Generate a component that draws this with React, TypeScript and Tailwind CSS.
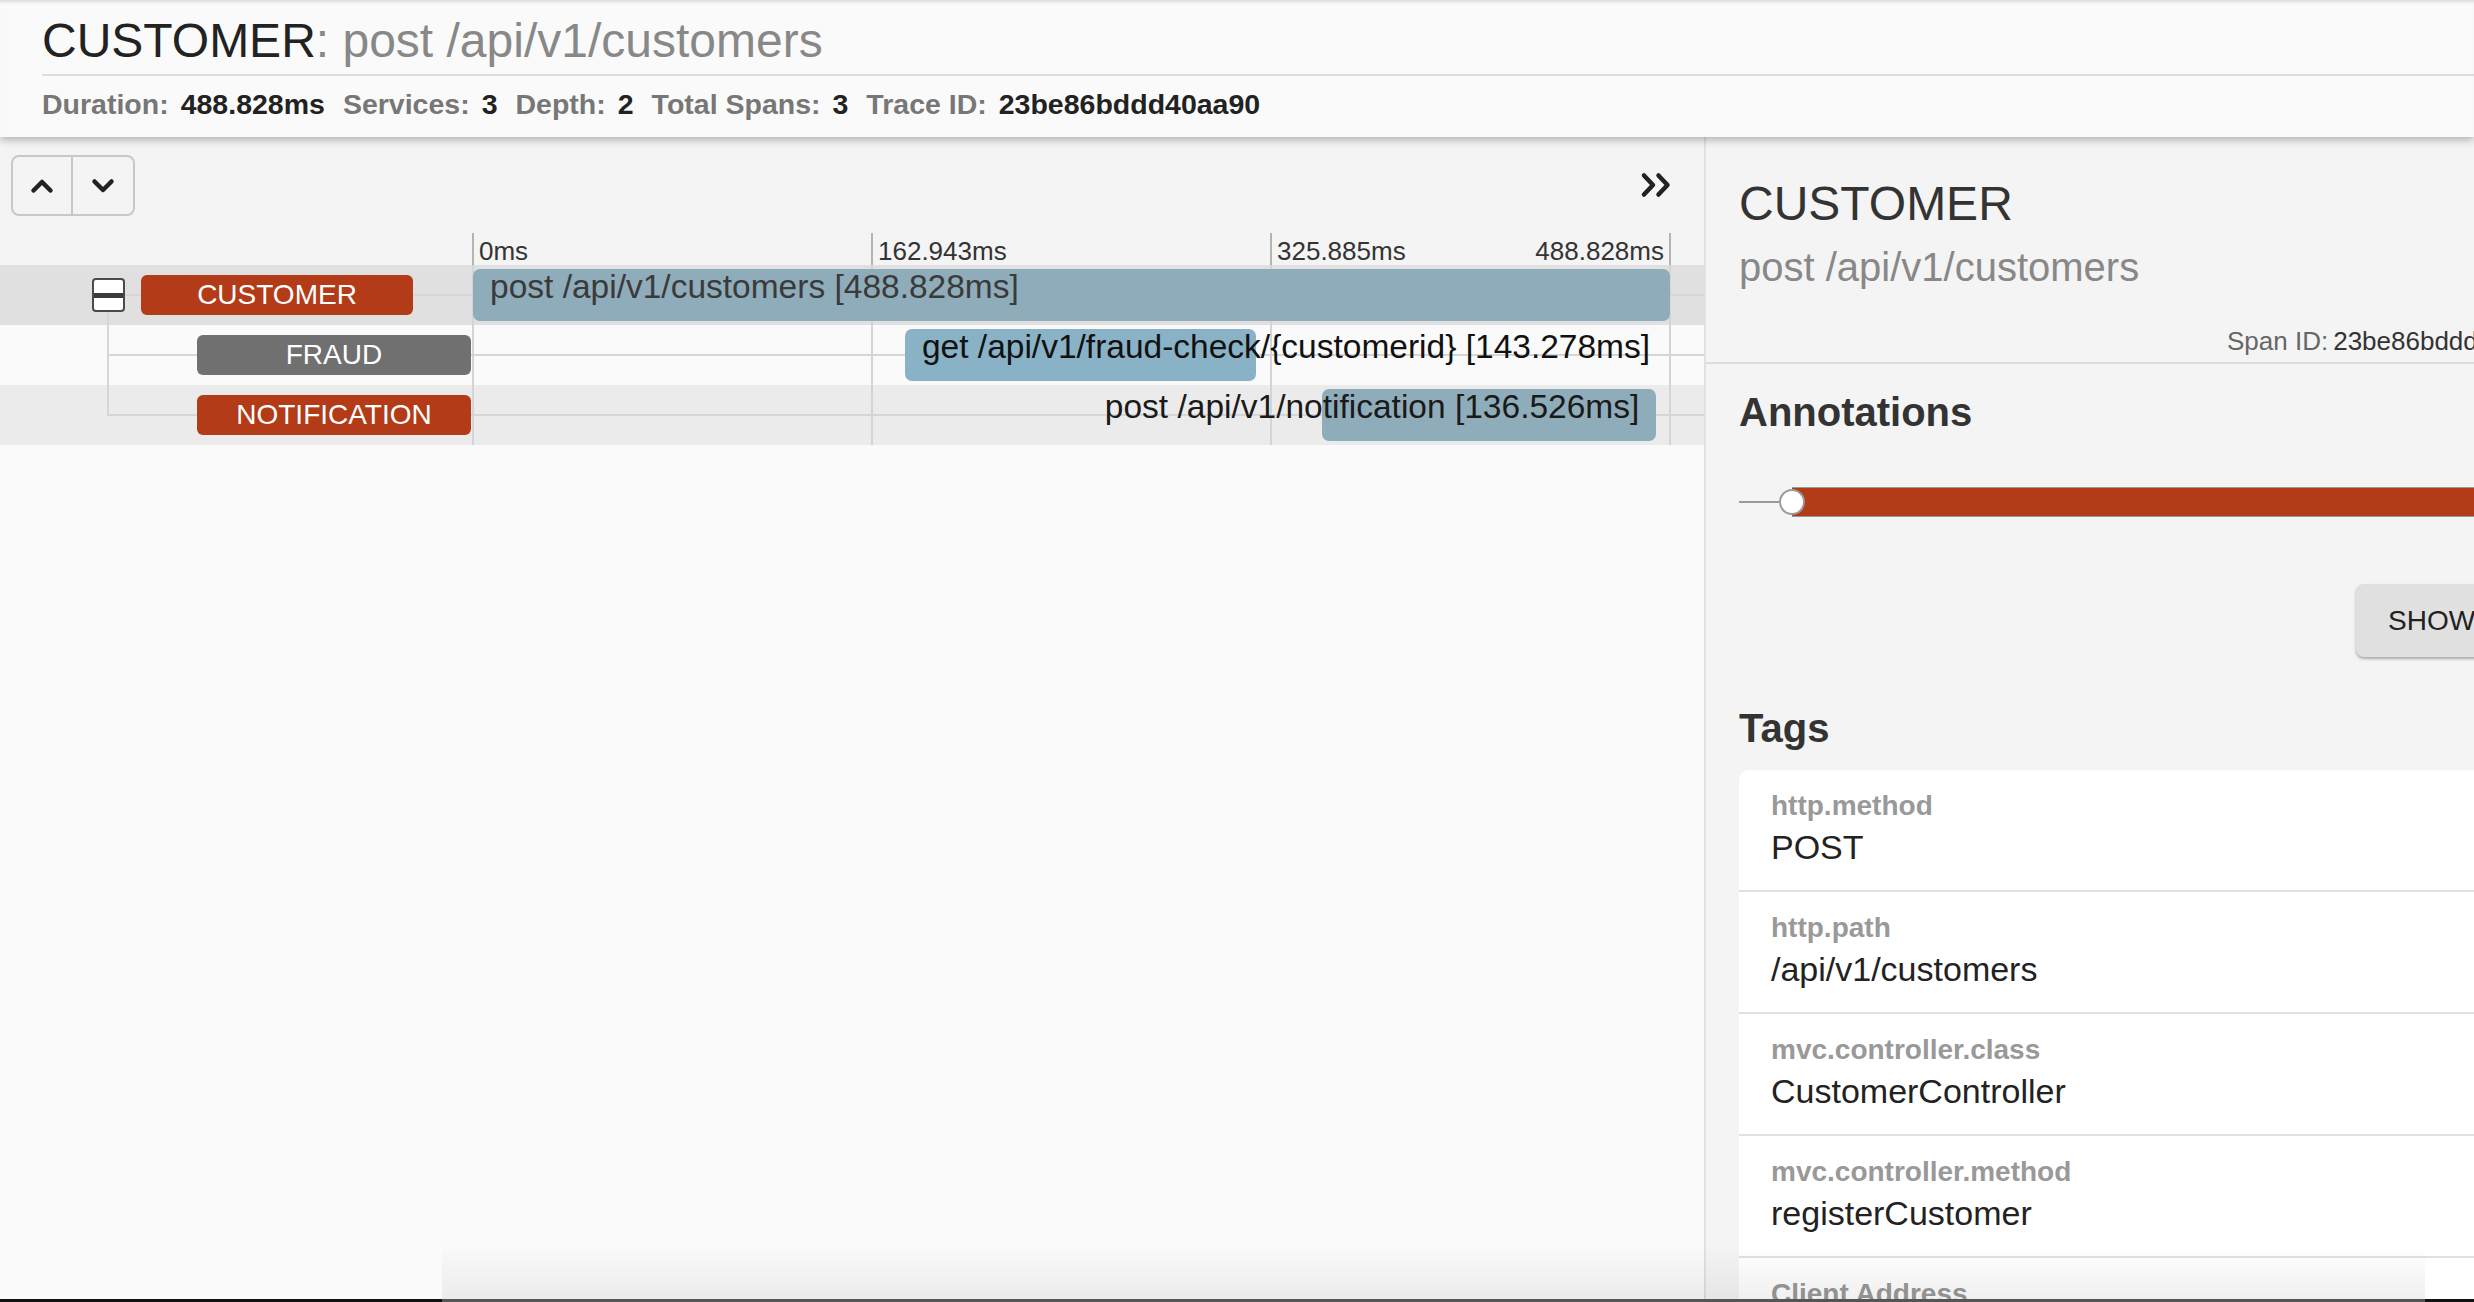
import React from "react";

interface Span {
  id: string;
  service: string;
  name: string;
  start: number;
  duration: number;
  depth: number;
  badgeColor: string;
  barColor: string;
  rowBg: string;
  textColor: string;
}

const TOTAL_MS = 488.828;

const spans: Span[] = [
  {
    id: "customer",
    service: "CUSTOMER",
    name: "post /api/v1/customers",
    start: 0,
    duration: 488.828,
    depth: 0,
    badgeColor: "bg-[#b33b18]",
    barColor: "bg-[#8facba]",
    rowBg: "bg-[#e0e0e0]",
    textColor: "text-[#3a3a3a]",
  },
  {
    id: "fraud",
    service: "FRAUD",
    name: "get /api/v1/fraud-check/{customerid}",
    start: 176.4,
    duration: 143.278,
    depth: 1,
    badgeColor: "bg-[#707070]",
    barColor: "bg-[#8ab2c7]",
    rowBg: "bg-[#fafafa]",
    textColor: "text-[#111]",
  },
  {
    id: "notification",
    service: "NOTIFICATION",
    name: "post /api/v1/notification",
    start: 346.7,
    duration: 136.526,
    depth: 1,
    badgeColor: "bg-[#b33b18]",
    barColor: "bg-[#8facbb]",
    rowBg: "bg-[#ebebeb]",
    textColor: "text-[#1a1a1a]",
  },
];

const ticks = ["0ms", "162.943ms", "325.885ms", "488.828ms"];

const tags = [
  { key: "http.method", value: "POST" },
  { key: "http.path", value: "/api/v1/customers" },
  { key: "mvc.controller.class", value: "CustomerController" },
  { key: "mvc.controller.method", value: "registerCustomer" },
  { key: "Client Address", value: "172.18.0.1" },
];

const headerStats = [
  { label: "Duration:", value: "488.828ms" },
  { label: "Services:", value: "3" },
  { label: "Depth:", value: "2" },
  { label: "Total Spans:", value: "3" },
  { label: "Trace ID:", value: "23be86bddd40aa90" },
];

function Chevron({ up }: { up: boolean }) {
  return (
    <svg width="24" height="16" viewBox="0 0 24 16" fill="none">
      <polyline
        points={up ? "3.5,12.5 12,4 20.5,12.5" : "3.5,3.5 12,12 20.5,3.5"}
        stroke="#222"
        strokeWidth="4.5"
        strokeLinecap="round"
        strokeLinejoin="round"
      />
    </svg>
  );
}

function DoubleChevron() {
  return (
    <svg width="33" height="26" viewBox="0 0 33 26" fill="none">
      <polyline points="4,3.5 13,13 4,22.5" stroke="#222" strokeWidth="4.5" strokeLinecap="round" strokeLinejoin="round" />
      <polyline points="18.5,3.5 27.5,13 18.5,22.5" stroke="#222" strokeWidth="4.5" strokeLinecap="round" strokeLinejoin="round" />
    </svg>
  );
}

// vertical grid lines of the timeline
function GridLines({ color }: { color: string }) {
  return (
    <>
      {[0, 1, 2, 3].map((i) => (
        <div
          key={i}
          className={`absolute top-0 bottom-0 w-[2px] ${color}`}
          style={{ left: `calc(${(i / 3) * 100}% - 1px)` }}
        />
      ))}
    </>
  );
}

function SpanRow({ span, index, count }: { span: Span; index: number; count: number }) {
  const left = (span.start / TOTAL_MS) * 100;
  const width = (span.duration / TOTAL_MS) * 100;
  const end = left + width;
  const label = `${span.name} [${span.duration.toFixed(3)}ms]`;
  const isLast = index === count - 1;

  return (
    <div className={`relative flex h-[60px] items-center ${span.rowBg}`}>
      {/* tree lines */}
      <div className="absolute left-[108px] right-0 top-[29px] h-[2px] bg-[#d6d6d6]" />
      {index === 0 ? (
        <div className="absolute left-[107px] top-[47px] bottom-0 w-[2px] bg-[#d6d6d6]" />
      ) : (
        <div
          className={`absolute left-[107px] top-0 w-[2px] bg-[#d6d6d6] ${
            isLast ? "h-[31px]" : "bottom-0"
          }`}
        />
      )}

      {/* label column */}
      <div className="flex h-full w-[473px] shrink-0 items-center">
        {span.depth === 0 ? (
          <>
            <div className="relative ml-[92px] flex h-[34px] w-[33px] items-center rounded-[4px] border-2 border-[#4a4a4a] bg-white">
              <div className="h-[5px] w-full bg-[#3a3a3a]" />
            </div>
            <div
              className={`relative ml-[16px] flex h-[40px] w-[272px] items-center justify-center rounded-[6px] text-[28px] leading-none text-white ${span.badgeColor}`}
            >
              {span.service}
            </div>
          </>
        ) : (
          <div
            className={`relative ml-[197px] flex h-[40px] w-[274px] items-center justify-center rounded-[6px] text-[28px] leading-none text-white ${span.badgeColor}`}
          >
            {span.service}
          </div>
        )}
      </div>

      {/* timeline */}
      <div className="relative h-full w-[1197px] shrink-0">
        <GridLines color="bg-[#d4d4d4]" />
        <div
          className={`absolute top-[4px] bottom-[4px] rounded-[7px] ${span.barColor}`}
          style={{ left: `${left}%`, width: `${width}%` }}
        />
        <div
          className={`absolute top-0 bottom-0 flex items-center whitespace-nowrap text-[33.5px] leading-none ${span.textColor}`}
          style={
            left < 50
              ? { left: `${left}%`, paddingLeft: 17 }
              : { right: `${100 - end}%`, paddingRight: 17 }
          }
        >
          <span className="-translate-y-[8px]">{label}</span>
        </div>
      </div>
    </div>
  );
}

export default function App(): JSX.Element {
  return (
    <div className="relative flex h-[1302px] w-[2474px] flex-col overflow-hidden bg-[#f4f4f4] font-['Liberation_Sans',Arial,sans-serif]">
      {/* Header */}
      <div className="relative z-10 h-[137px] shrink-0 bg-[#fafafa] pl-[42px] pt-[17px] shadow-[0_3px_8px_rgba(0,0,0,0.28),inset_0_4px_4px_-3px_rgba(0,0,0,0.18)]">
        <div className="whitespace-nowrap text-[48px] leading-none text-[#222]">
          CUSTOMER<span className="text-[#888]">: post /api/v1/customers</span>
        </div>
        <div className="mt-[9px] h-[2px] bg-[#dddddd]" />
        <div className="mt-[14px] flex whitespace-nowrap text-[28.5px] font-bold leading-none">
          {headerStats.map((stat) => (
            <div key={stat.label} className="mr-[18px] flex">
              <span className="mr-[12px] text-[#777]">{stat.label}</span>
              <span className="text-[#222]">{stat.value}</span>
            </div>
          ))}
        </div>
      </div>

      <div className="flex min-h-0 flex-1">
        {/* Timeline panel */}
        <div className="flex w-[1704px] shrink-0 flex-col bg-[#fafafa]">
          {/* Toolbar */}
          <div className="flex h-[96px] shrink-0 items-start justify-between bg-[#f4f4f4] pl-[11px] pr-[31px]">
            <div className="mt-[18px] flex h-[61px] w-[124px] rounded-[8px] border-2 border-[#c8c8c8]">
              <div className="flex w-1/2 items-center justify-center border-r-2 border-[#c8c8c8]">
                <Chevron up />
              </div>
              <div className="flex w-1/2 items-center justify-center">
                <Chevron up={false} />
              </div>
            </div>
            <div className="mt-[35px]">
              <DoubleChevron />
            </div>
          </div>

          {/* Tick header */}
          <div className="flex h-[32px] shrink-0 bg-[#f4f4f4]">
            <div className="w-[473px] shrink-0" />
            <div className="relative flex h-full w-[1197px] shrink-0 text-[26px] leading-none text-[#333]">
              <GridLines color="bg-[#b4b4b4]" />
              {ticks.slice(0, 3).map((tick, i) => (
                <div key={tick} className="flex w-1/3 pt-[5px]">
                  <span className="pl-[6px]">{tick}</span>
                  {i === 2 && <span className="ml-auto pr-[6px]">{ticks[3]}</span>}
                </div>
              ))}
            </div>
          </div>

          {/* Spans */}
          {spans.map((span, i) => (
            <SpanRow key={span.id} span={span} index={i} count={spans.length} />
          ))}
        </div>

        {/* Detail panel */}
        <div className="w-[1000px] shrink-0 border-l-2 border-[#e0e0e0] bg-[#f4f4f4]">
          <div className="border-b-2 border-[#dddddd] pb-[8px] pl-[33px] pt-[43px]">
            <div className="text-[48px] leading-none text-[#333]">CUSTOMER</div>
            <div className="mt-[19px] text-[40px] leading-none text-[#888]">
              post /api/v1/customers
            </div>
            <div className="ml-[488px] mt-[41px] whitespace-nowrap text-[26px] leading-none">
              <span className="text-[#666]">Span ID:</span>
              <span className="ml-[5px] text-[#333]">23be86bddd40aa90</span>
            </div>
          </div>

          <div className="pl-[33px] pt-[28px]">
            <div className="text-[40px] font-bold leading-none text-[#333]">Annotations</div>

            {/* Annotation timeline */}
            <div className="mt-[55px] flex h-[30px] items-center">
              <div className="h-[2px] w-[40px] bg-[#9a9a9a]" />
              <div className="relative z-10 -mr-[13px] h-[26px] w-[26px] rounded-full border-2 border-[#9a9a9a] bg-white" />
              <div className="h-[30px] flex-1 border-y border-[#999] bg-[#b23c18]" />
            </div>

            <button className="ml-[617px] mt-[67px] h-[73px] whitespace-nowrap rounded-[8px] bg-[#e0e0e0] px-[32px] text-[28px] leading-none text-[#222] shadow-[0_2px_3px_rgba(0,0,0,0.3)]">
              SHOW ALL ANNOTATIONS
            </button>

            <div className="mt-[51px] text-[40px] font-bold leading-none text-[#333]">Tags</div>

            <div className="mt-[22px] rounded-tl-[10px] bg-white">
              {tags.map((tag) => (
                <div
                  key={tag.key}
                  className="border-b-2 border-[#e0e0e0] pb-[26px] pl-[32px] pt-[22px]"
                >
                  <div className="text-[28px] font-bold leading-none text-[#999]">{tag.key}</div>
                  <div className="mt-[10px] text-[34px] leading-none text-[#222]">{tag.value}</div>
                </div>
              ))}
            </div>
          </div>
        </div>
      </div>

      {/* bottom edge of the window */}
      <div className="pointer-events-none absolute bottom-[3px] left-[442px] right-[49px] h-[55px] bg-gradient-to-t from-[rgba(0,0,0,0.06)] to-transparent" />
      <div className="absolute bottom-0 left-0 right-0 flex h-[3px]">
        <div className="w-[442px] bg-[#111]" />
        <div className="flex-1 bg-[#555]" />
        <div className="w-[49px] bg-[#111]" />
      </div>
    </div>
  );
}
